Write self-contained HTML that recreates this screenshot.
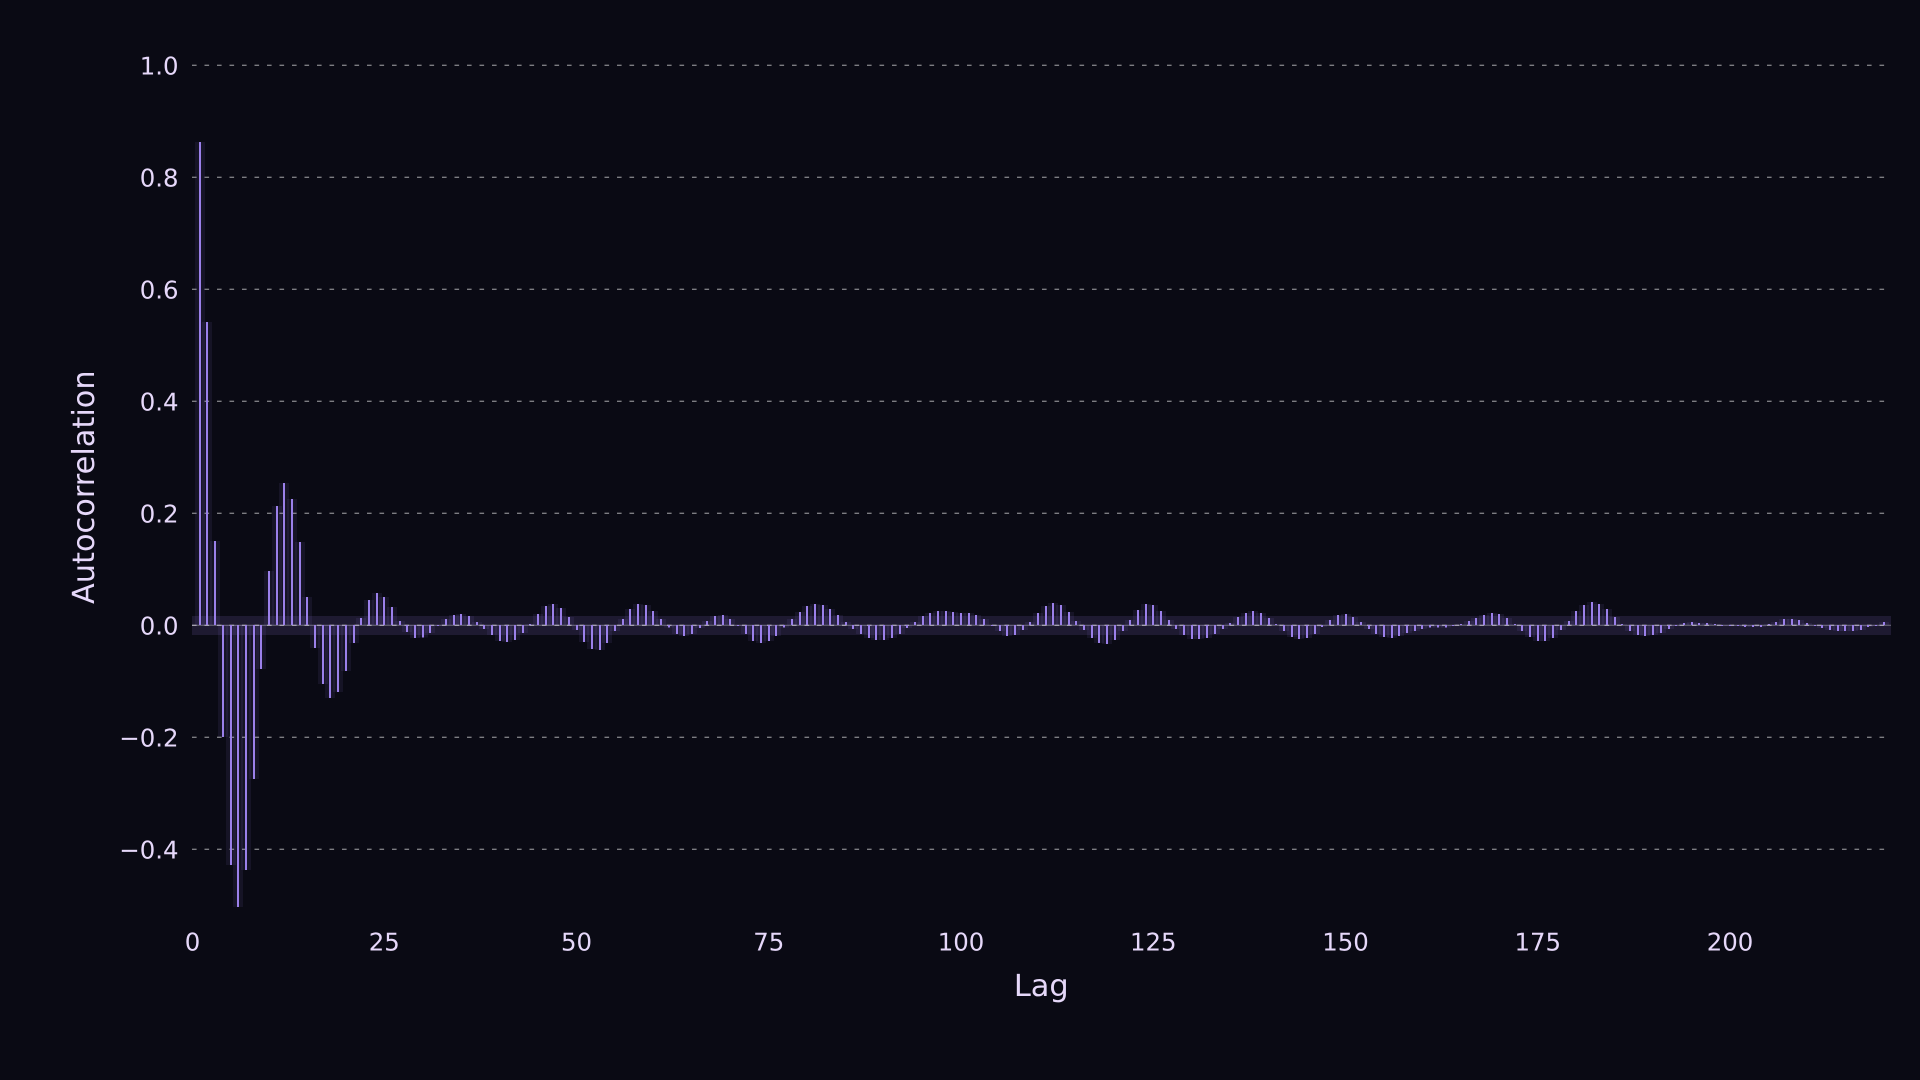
<!DOCTYPE html>
<html lang="en">
<head>
<meta charset="utf-8">
<title>Autocorrelation</title>
<style>
html,body{margin:0;padding:0;width:1920px;height:1080px;background:#0a0a14;overflow:hidden}
svg{display:block}
text{font-family:"DejaVu Sans","Liberation Sans",sans-serif;fill:#e6d8fa;text-rendering:geometricPrecision}
.t{font-size:24.4px}
.l{font-size:30.4px}
</style>
</head>
<body>
<svg id="c" xmlns="http://www.w3.org/2000/svg" width="1920" height="1080" viewBox="0 0 1920 1080">
<rect width="1920" height="1080" fill="#0a0a14"/>
<g id="grid" stroke="#fff" stroke-opacity=".47" stroke-width="1.3" stroke-dasharray="4.6 7.9" fill="none">
<path d="M192 65.3H1886"/><path d="M192 177.3H1886"/><path d="M192 289.3H1886"/><path d="M192 401.3H1886"/><path d="M192 513.3H1886"/><path d="M192 625.3H1886"/><path d="M192 737.3H1886"/><path d="M192 849.3H1886"/>
</g>
<rect x="192" y="616" width="1699" height="19" fill="#a78bfa" fill-opacity=".13"/>
<path d="M192 625.3H1891" stroke="#fff" stroke-opacity=".32" stroke-width="1.2" fill="none"/>
<g id="halo" fill="#a78bfa" fill-opacity=".08" shape-rendering="crispEdges"></g>
<g id="bars" fill="#9b80ea" shape-rendering="crispEdges"></g>
<g class="t" text-anchor="end">
<text x="178.5" y="74.6">1.0</text>
<text x="178.5" y="186.6">0.8</text>
<text x="178.5" y="298.6">0.6</text>
<text x="178.5" y="410.6">0.4</text>
<text x="178.5" y="522.6">0.2</text>
<text x="178.5" y="634.6">0.0</text>
<text x="178.5" y="746.6">−0.2</text>
<text x="178.5" y="858.6">−0.4</text>
</g>
<g class="t" text-anchor="middle">
<text x="192.5" y="950.7">0</text>
<text x="384.3" y="950.7">25</text>
<text x="576.5" y="950.7">50</text>
<text x="768.8" y="950.7">75</text>
<text x="961" y="950.7">100</text>
<text x="1153.3" y="950.7">125</text>
<text x="1345.5" y="950.7">150</text>
<text x="1537.8" y="950.7">175</text>
<text x="1730" y="950.7">200</text>
</g>
<text class="l" x="1041.3" y="996" text-anchor="middle">Lag</text>
<text class="l" transform="translate(94 487.2) rotate(-90)" text-anchor="middle">Autocorrelation</text>
</svg>
<script>
(function(){
var a=[483,303,84,-112,-240,-282,-245,-154,-44,54,119,142,126,83,28,-23,-59,-73,-67,-46,-18,7,25,32,28,18,4,-7,-13];
var z=[-38,-24,-2,18,30,33,27,9,-12,-30,-48,-51,-45,-24,3,33,57,63,51,24,-15,-51,-72,-75,-54,-18,18,48,63,60,42,18,-8,-27,-33,-27,-9,12,27,30,18,-2,-27,-48,-54,-48,-33,-8,18,39,57,63,
60,48,30,9,-12,-27,-39,-45,-45,-39,-27,-9,9,27,36,42,42,39,36,36,30,18,-2,-18,-33,-30,-15,9,36,57,66,60,39,12,-15,-39,-54,-57,-45,-18,15,45,63,60,42,15,-12,-30,-42,-42,-39,-27,
-12,6,24,36,42,36,21,3,-18,-36,-42,-39,-27,-6,15,30,33,24,9,-12,-27,-36,-39,-33,-24,-18,-12,-8,-8,-8,-1,3,12,21,30,36,33,21,3,-18,-36,-48,-48,-39,-15,12,
42,60,69,63,48,24,3,-18,-30,-33,-30,-24,-12,-1,6,9,6,6,3,-1,-1,-1,-6,-6,-6,3,9,18,18,15,6,-1,-9,-15,-18,-18,-18,-15,-6,-1,9];
var v=a.concat(z.map(function(n){return n/3}));
var base=625,NS="http://www.w3.org/2000/svg",h=document.getElementById("halo"),b=document.getElementById("bars");
function r(p,x,w,y,ht){var e=document.createElementNS(NS,"rect");e.setAttribute("x",x);e.setAttribute("width",w);e.setAttribute("y",y);e.setAttribute("height",ht);p.appendChild(e)}
v.forEach(function(d,i){
 var c=Math.round(192.05+7.69*(i+1));
 var top=d>=0?base-d:base;
 var ht=Math.max(Math.abs(d),1);
 r(h,c-5,10,top,ht);
 r(b,c-1,2,top,ht);
});
})();
</script>
</body>
</html>
